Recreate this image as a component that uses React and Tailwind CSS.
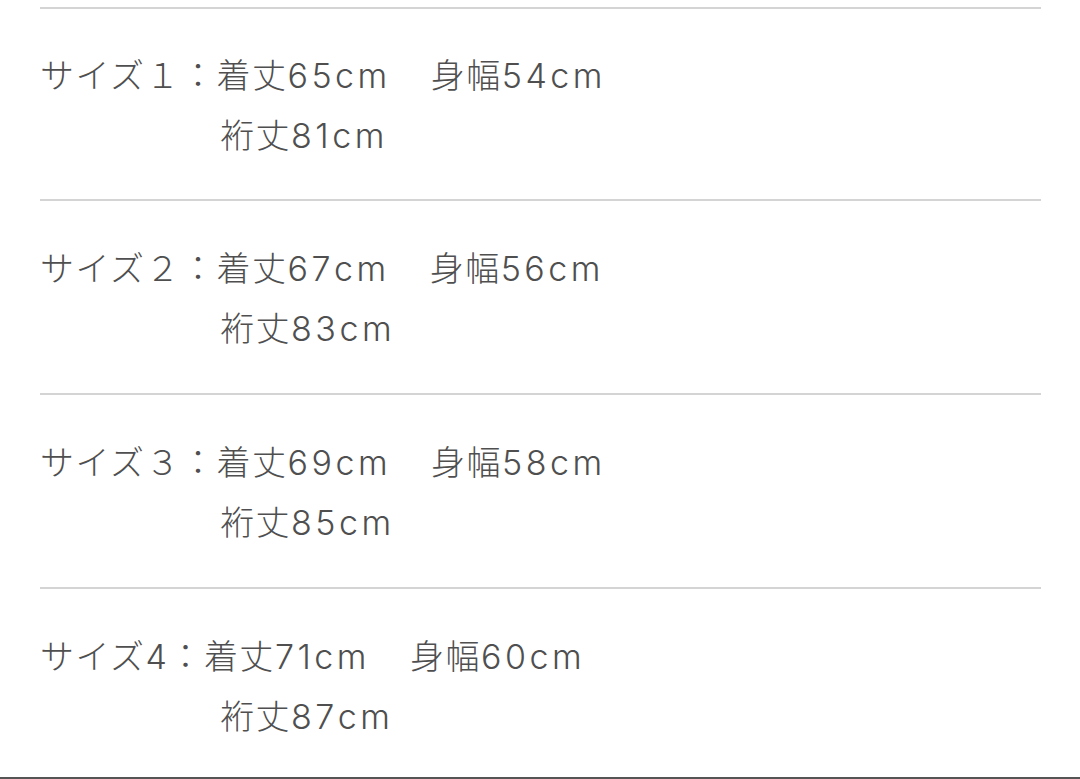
import React from 'react';

const sizes = [
    { label: 'サイズ１', length: '65', width: '54', sleeve: '81' },
    { label: 'サイズ２', length: '67', width: '56', sleeve: '83' },
    { label: 'サイズ３', length: '69', width: '58', sleeve: '85' },
    { label: 'サイズ4', length: '71', width: '60', sleeve: '87' },
];

const Measure = ({ name, value }) => (
    <span>
        {name}
        <span className="tracking-[3.5px]">{value}cm</span>
    </span>
);

const SizeRow = ({ item, first, last }) => (
    <div
        className={`
            ${first ? 'pt-[36px] pb-[34px]' : last ? 'pt-[37px] pb-[31px]' : 'pt-[37px] pb-[35px]'}
            ${last ? '' : 'border-b-2 border-[#d4d4d4]'}
        `}
    >
        <div className="h-[60px] flex items-center whitespace-pre">
            <span>{item.label}</span>
            <span>：</span>
            <Measure name="着丈" value={item.length} />
            <span className="w-[40px]"></span>
            <Measure name="身幅" value={item.width} />
        </div>
        <div className="h-[60px] flex items-center pl-[180px] whitespace-pre">
            <Measure name="裄丈" value={item.sleeve} />
        </div>
    </div>
);

export default function App() {
    return (
        <div className="w-[1080px] h-[779px] bg-white flex flex-col overflow-hidden">
            <div className="pt-[7px] px-[40px] flex-1 min-h-0">
                <div
                    className="mr-[-1px] border-t-2 border-[#d4d4d4] text-[#4f4f4f] text-[34px] font-light tracking-[1.5px]"
                    style={{ fontFamily: 'Inter, "Noto Sans CJK JP", sans-serif' }}
                >
                    {sizes.map((item, idx) => (
                        <SizeRow
                            key={idx}
                            item={item}
                            first={idx === 0}
                            last={idx === sizes.length - 1}
                        />
                    ))}
                </div>
            </div>
            <div className="h-[2px] shrink-0 bg-[#555555]"></div>
        </div>
    );
}
